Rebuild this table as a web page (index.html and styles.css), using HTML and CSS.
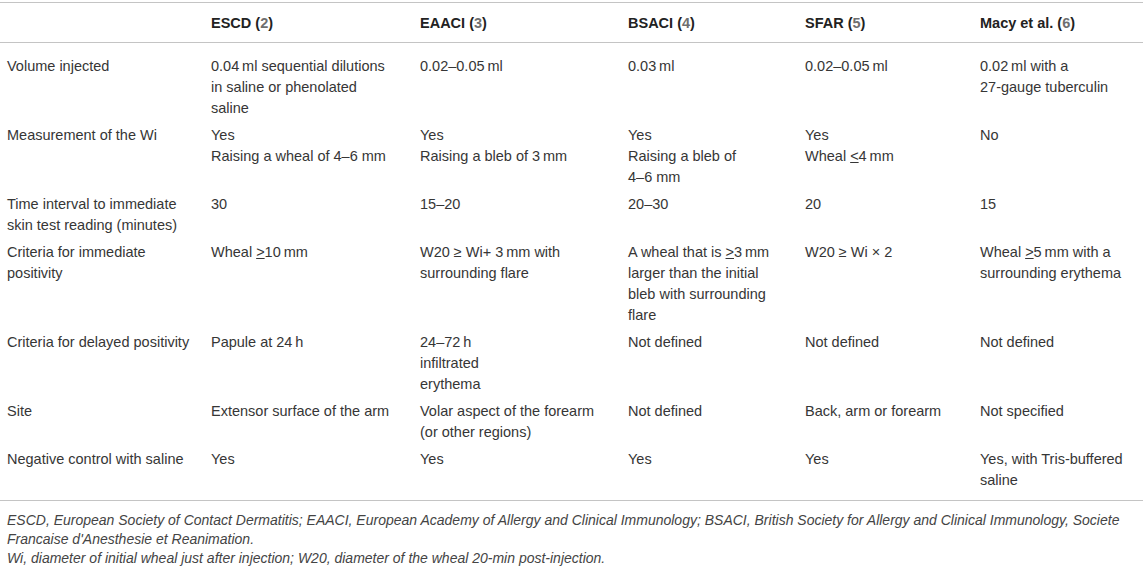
FILE: index.html
```html
<!DOCTYPE html>
<html lang="en">
<head>
<meta charset="utf-8">
<title>Intradermal test protocols</title>
<link rel="stylesheet" href="styles.css">
</head>
<body>
<div class="wrap">
<table class="grid">
  <colgroup>
    <col class="c1"><col class="c2"><col class="c3"><col class="c4"><col class="c5"><col class="c6">
  </colgroup>
  <thead>
    <tr>
      <th></th>
      <th>ESCD (<span class="ref">2</span>)</th>
      <th>EAACI (<span class="ref">3</span>)</th>
      <th>BSACI (<span class="ref">4</span>)</th>
      <th>SFAR (<span class="ref">5</span>)</th>
      <th>Macy et al. (<span class="ref">6</span>)</th>
    </tr>
  </thead>
  <tbody>
    <tr>
      <td>Volume injected</td>
      <td>0.04&#8201;ml sequential dilutions<br>in saline or phenolated<br>saline</td>
      <td>0.02–0.05&#8201;ml</td>
      <td>0.03&#8201;ml</td>
      <td>0.02–0.05&#8201;ml</td>
      <td>0.02&#8201;ml with a<br>27-gauge tuberculin</td>
    </tr>
    <tr>
      <td>Measurement of the Wi</td>
      <td>Yes<br>Raising a wheal of 4–6 mm</td>
      <td>Yes<br>Raising a bleb of 3&#8201;mm</td>
      <td>Yes<br>Raising a bleb of<br>4–6 mm</td>
      <td>Yes<br>Wheal <span class="u">&lt;</span>4&#8201;mm</td>
      <td>No</td>
    </tr>
    <tr>
      <td>Time interval to immediate<br>skin test reading (minutes)</td>
      <td>30</td>
      <td>15–20</td>
      <td>20–30</td>
      <td>20</td>
      <td>15</td>
    </tr>
    <tr>
      <td>Criteria for immediate<br>positivity</td>
      <td>Wheal <span class="u">&gt;</span>10&#8201;mm</td>
      <td>W20 ≥ Wi+ 3&#8201;mm with<br>surrounding flare</td>
      <td>A wheal that is <span class="u">&gt;</span>3&#8201;mm<br>larger than the initial<br>bleb with surrounding<br>flare</td>
      <td>W20 ≥ Wi × 2</td>
      <td>Wheal <span class="u">&gt;</span>5&#8201;mm with a<br>surrounding erythema</td>
    </tr>
    <tr>
      <td>Criteria for delayed positivity</td>
      <td>Papule at 24&#8201;h</td>
      <td>24–72&#8201;h<br>infiltrated<br>erythema</td>
      <td>Not defined</td>
      <td>Not defined</td>
      <td>Not defined</td>
    </tr>
    <tr>
      <td>Site</td>
      <td>Extensor surface of the arm</td>
      <td>Volar aspect of the forearm<br>(or other regions)</td>
      <td>Not defined</td>
      <td>Back, arm or forearm</td>
      <td>Not specified</td>
    </tr>
    <tr>
      <td>Negative control with saline</td>
      <td>Yes</td>
      <td>Yes</td>
      <td>Yes</td>
      <td>Yes</td>
      <td>Yes, with Tris-buffered<br>saline</td>
    </tr>
  </tbody>
</table>
<div class="notes">
  <p>ESCD, European Society of Contact Dermatitis; EAACI, European Academy of Allergy and Clinical Immunology; BSACI, British Society for Allergy and Clinical Immunology, Societe Francaise d'Anesthesie et Reanimation.</p>
  <p>Wi, diameter of initial wheal just after injection; W20, diameter of the wheal 20-min post-injection.</p>
</div>
</div>
</body>
</html>
```

FILE: styles.css
```css
html, body {
  margin: 0;
  padding: 0;
  background: #ffffff;
}

body {
  font-family: "Liberation Sans", Arial, Helvetica, sans-serif;
  color: #363636;
}

.wrap {
  padding-top: 2px;
}

.grid {
  width: 1143px;
  border-collapse: collapse;
  table-layout: fixed;
  font-size: 14.5px;
  line-height: 21px;
}

.c1 { width: 204px; }
.c2 { width: 209px; }
.c3 { width: 208px; }
.c4 { width: 177px; }
.c5 { width: 175px; }
.c6 { width: 170px; }

.grid thead tr {
  border-top: 1px solid #c4c4c4;
  border-bottom: 1px solid #c4c4c4;
}

.grid th {
  text-align: left;
  vertical-align: top;
  font-weight: bold;
  color: #222222;
  padding: 10px 4px 8px 7px;
}

.ref {
  color: #6f6f6f;
}

.grid td {
  vertical-align: top;
  padding: 3px 4px 3px 7px;
}

.grid tbody tr:first-child td {
  padding-top: 13px;
}

.grid tbody tr:last-child td {
  padding-bottom: 9px;
}

.grid tbody tr:last-child {
  border-bottom: 1px solid #c4c4c4;
}

.u {
  text-decoration: underline;
  text-underline-offset: 1px;
}

.notes {
  font-size: 14px;
  line-height: 19px;
  font-style: italic;
  color: #444444;
  padding: 10px 7px 0 7px;
}

.notes p {
  margin: 0;
}
```
